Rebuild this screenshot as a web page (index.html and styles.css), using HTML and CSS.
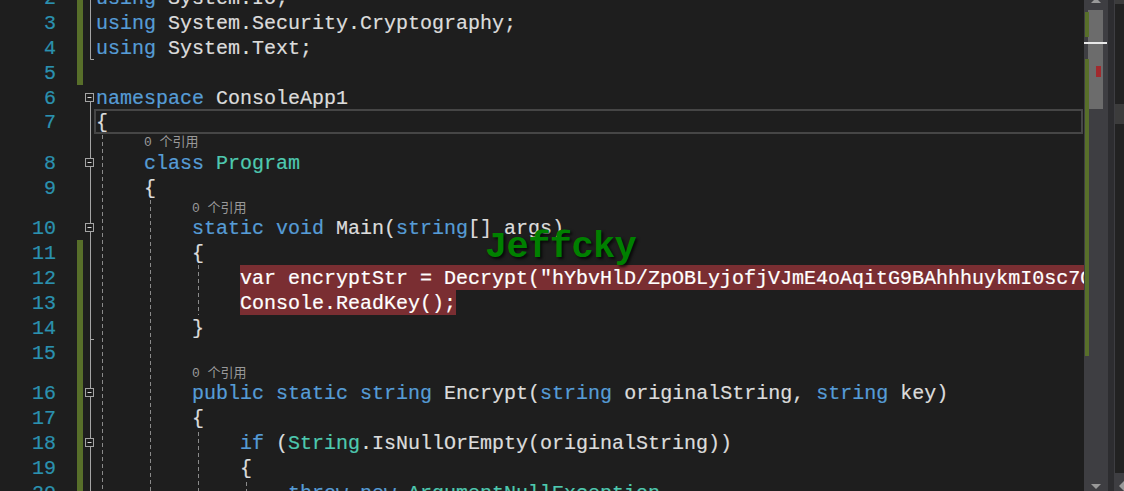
FILE: index.html
```html
<!DOCTYPE html>
<html lang="zh">
<head>
<meta charset="utf-8">
<title>Program.cs</title>
<link rel="stylesheet" href="styles.css">
</head>
<body>
<div class="window">
  <main class="editor">
    <div class="lines">
      <div class="row changed"><span class="num">2</span><span class="mark"></span><code class="code"><b class="k">using</b> System.IO;</code></div>
      <div class="row changed"><span class="num">3</span><span class="mark"></span><code class="code"><b class="k">using</b> System.Security.Cryptography;</code></div>
      <div class="row changed"><span class="num">4</span><span class="mark"></span><code class="code"><b class="k">using</b> System.Text;</code></div>
      <div class="row changed"><span class="num">5</span><span class="mark"></span><code class="code"></code></div>
      <div class="row"><span class="num">6</span><span class="mark"></span><code class="code"><b class="k">namespace</b> ConsoleApp1</code></div>
      <div class="row current"><span class="num">7</span><span class="mark"></span><code class="code">{</code></div>
      <div class="lens"><span class="mark"></span><span class="lens-text i1">0 个引用</span></div>
      <div class="row"><span class="num">8</span><span class="mark"></span><code class="code i1"><b class="k">class</b> <b class="t">Program</b></code></div>
      <div class="row"><span class="num">9</span><span class="mark"></span><code class="code i1">{</code></div>
      <div class="lens"><span class="mark"></span><span class="lens-text i2">0 个引用</span></div>
      <div class="row"><span class="num">10</span><span class="mark"></span><code class="code i2"><b class="k">static</b> <b class="k">void</b> Main(<b class="k">string</b>[] args)</code></div>
      <div class="row changed"><span class="num">11</span><span class="mark"></span><code class="code i2">{</code></div>
      <div class="row changed"><span class="num">12</span><span class="mark"></span><code class="code i3 hit wide">var encryptStr = Decrypt("hYbvHlD/ZpOBLyjofjVJmE4oAqitG9BAhhhuykmI0sc7O6Yw");</code></div>
      <div class="row changed"><span class="num">13</span><span class="mark"></span><code class="code i3"><span class="hit">Console.ReadKey();</span></code></div>
      <div class="row changed"><span class="num">14</span><span class="mark"></span><code class="code i2">}</code></div>
      <div class="row changed"><span class="num">15</span><span class="mark"></span><code class="code"></code></div>
      <div class="lens changed"><span class="mark"></span><span class="lens-text i2">0 个引用</span></div>
      <div class="row changed"><span class="num">16</span><span class="mark"></span><code class="code i2"><b class="k">public</b> <b class="k">static</b> <b class="k">string</b> Encrypt(<b class="k">string</b> originalString, <b class="k">string</b> key)</code></div>
      <div class="row changed"><span class="num">17</span><span class="mark"></span><code class="code i2">{</code></div>
      <div class="row changed"><span class="num">18</span><span class="mark"></span><code class="code i3"><b class="k">if</b> (<b class="t">String</b>.IsNullOrEmpty(originalString))</code></div>
      <div class="row changed"><span class="num">19</span><span class="mark"></span><code class="code i3">{</code></div>
      <div class="row changed"><span class="num">20</span><span class="mark"></span><code class="code i4"><b class="k">throw</b> <b class="k">new</b> <b class="t">ArgumentNullException</b></code></div>
    </div>
    <svg class="guides" width="1084" height="491" viewBox="0 0 1084 491" aria-hidden="true">
      <g class="dash">
        <path d="M102.5 135V491"/>
        <path d="M150.5 200V491"/>
        <path d="M198.5 265V315M198.5 432V491"/>
        <path d="M246.5 482V491"/>
      </g>
      <g class="fold">
        <path d="M90.5 0V59.5H94"/>
        <path d="M90.5 102V158M90.5 167V223M90.5 232V388M90.5 397V438M90.5 447V491M90.5 339.5H94"/>
        <g class="box">
          <rect x="85.5" y="93.5" width="8" height="8"/><path d="M87.5 97.5h4"/>
          <rect x="85.5" y="158.5" width="8" height="8"/><path d="M87.5 162.5h4"/>
          <rect x="85.5" y="223.5" width="8" height="8"/><path d="M87.5 227.5h4"/>
          <rect x="85.5" y="388.5" width="8" height="8"/><path d="M87.5 392.5h4"/>
          <rect x="85.5" y="438.5" width="8" height="8"/><path d="M87.5 442.5h4"/>
        </g>
      </g>
    </svg>
    <div class="watermark">Jeffcky</div>
  </main>
  <aside class="scrollbar">
    <span class="arrow-up"></span>
    <span class="thumb"></span>
    <span class="change c1"></span>
    <span class="change c2"></span>
    <span class="caret"></span>
    <span class="err"></span>
    <span class="arrow-down"></span>
  </aside>
  <div class="strip"></div>
  <aside class="outer">
    <span class="grip top"></span>
    <span class="gap g1"></span>
    <span class="grip mid"></span>
    <span class="gap g2"></span>
    <span class="outer-end"><span class="arrow-left"></span></span>
  </aside>
</div>
</body>
</html>
```

FILE: styles.css
```css
* { box-sizing: border-box; }
html, body { margin: 0; height: 100%; overflow: hidden; background: #1e1e1e; }
.window { display: flex; width: 1124px; height: 491px; overflow: hidden; }

.editor { position: relative; width: 1084px; height: 491px; overflow: hidden; flex: none; }
.lines { display: flex; flex-direction: column; margin-top: -15px; }

.row, .lens { display: flex; align-items: stretch; flex: none; }
.row { height: 24.9px; }
.lens { height: 15.6px; padding-left: 77px; }

.num { width: 56px; flex: none; text-align: right; color: #2b91af; font: 20px/28.9px "Liberation Mono", monospace; -webkit-text-stroke: .2px currentColor; }
.mark { width: 6px; flex: none; margin-left: 21px; }
.lens .mark { margin-left: 0; }
.changed .mark { background: #586f2a; }

.code {
  flex: 1; min-width: 0; margin-left: 13px; padding-left: 0;
  color: #dcdcdc; font: 20px/28.9px "Liberation Mono", monospace;
  -webkit-text-stroke: .2px currentColor;
  white-space: pre; overflow: hidden;
}
.code b, .hit { font-weight: normal; }
.k { color: #569cd6; }
.t { color: #4ec9b0; }
.i1 { margin-left: 61px; }
.i2 { margin-left: 109px; }
.i3 { margin-left: 157px; }
.i4 { margin-left: 205px; }
.hit { background: #7a2e32; color: #fff; }
.hit.wide { display: block; }
.row .code .hit { display: inline-block; height: 24.9px; vertical-align: top; }

.current .code { box-shadow: inset 0 0 0 2px #464646; margin-left: 11px; padding-left: 2px; margin-right: 1px; }

.lens-text { color: #999; font: 13px/17.6px "Liberation Mono", "Noto Sans CJK SC", monospace; white-space: pre; height: 15.6px; }
.lens-text.i1 { margin-left: 61px; }
.lens-text.i2 { margin-left: 109px; }

.guides { position: absolute; left: 0; top: 0; pointer-events: none; }
.dash path { fill: none; stroke: #8a8a8a; stroke-width: 1; stroke-dasharray: 4 3; }
.fold path { fill: none; stroke: #a5a5a5; stroke-width: 1; }
.box rect { fill: #1e1e1e; stroke: #a5a5a5; }
.box path { stroke: #d8d8d8; }

.watermark {
  position: absolute; left: 485px; top: 225px;
  color: #008000; font: bold 37px/44px "Liberation Mono", monospace;
  letter-spacing: -.6px;
  text-shadow: 2px 2px 3px rgba(0, 0, 0, .75);
}

.scrollbar { position: relative; width: 24px; flex: none; background: #3e3e42; }
.thumb { position: absolute; left: 4px; top: 10px; width: 15px; height: 99px; background: #6c6c6c; }
.change { position: absolute; left: 1px; width: 4px; background: #586f2a; }
.c1 { top: 12px; height: 25px; }
.c2 { top: 59px; height: 297px; }
.caret { position: absolute; left: 0; top: 42px; width: 23px; height: 2px; background: #e8e8e8; }
.err { position: absolute; left: 12px; top: 66px; width: 5px; height: 11px; background: #a12a2e; }
.arrow-up, .arrow-down { position: absolute; left: 7px; width: 0; height: 0; border-left: 5px solid transparent; border-right: 5px solid transparent; }
.arrow-up { top: -2px; border-bottom: 5px solid #999; }
.arrow-down { bottom: 2px; border-top: 5px solid #999; }

.strip { width: 6px; flex: none; background: #2d2d30; }
.outer { display: flex; flex-direction: column; flex: 1; border-left: 1px solid #3e3e42; background: #222; }
.grip { display: block; flex: none; background: #3c3c3c; }
.grip.top { height: 4px; }
.grip.mid { height: 20px; }
.gap { display: block; flex: none; background: #222; }
.g1 { height: 100px; }
.g2 { height: 349px; }
.outer-end { display: flex; align-items: center; flex: 1; background: #3e3e42; }
.arrow-left { width: 0; height: 0; margin-left: 4px; margin-top: 8px; border-top: 5px solid transparent; border-bottom: 5px solid transparent; border-right: 5px solid #999; }
```
